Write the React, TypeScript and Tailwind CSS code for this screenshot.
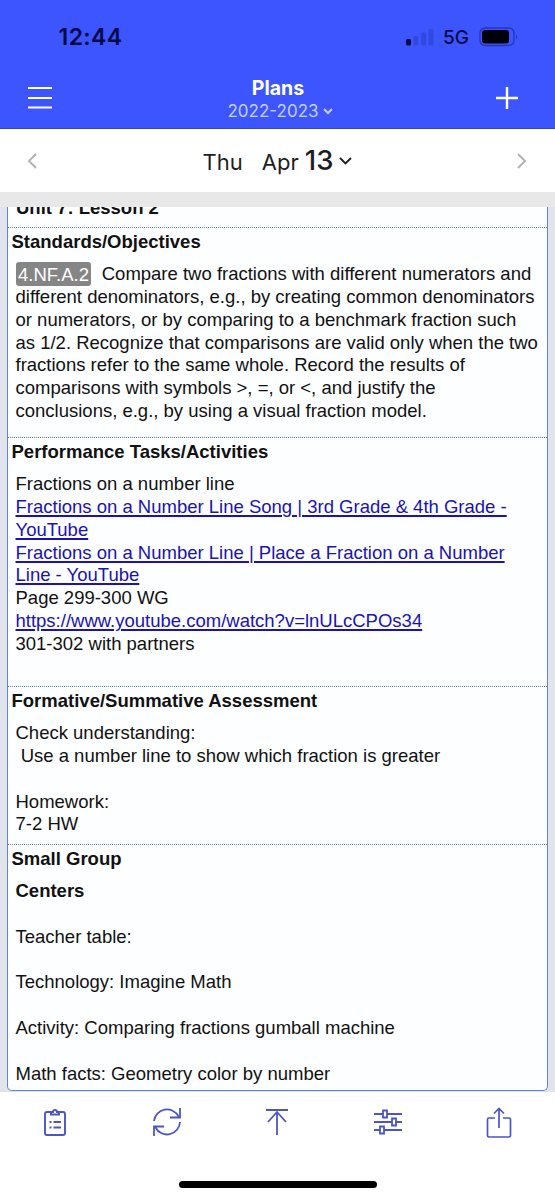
import React from "react";

function Section({ title, height, children }: { title: string; height: string; children: React.ReactNode }) {
  return (
    <section className={`${height} shrink-0 border-t border-dotted border-[#5f7fa6] pt-[2.500px] pl-[3.500px]`}>
      <h2 className="font-bold">{title}</h2>
      <div className="pt-[10px] pl-1 whitespace-pre">{children}</div>
    </section>
  );
}

function Link({ children }: { children: React.ReactNode }) {
  return (
    <a href="#" className="text-[#1a12b4] underline decoration-[1.500px] underline-offset-2">
      {children}
    </a>
  );
}

const iconProps = { fill: "none", stroke: "#4b55c4", strokeWidth: 1.6 } as const;

export default function App() {
  return (
    <div className="flex h-[1200px] w-[555px] flex-col overflow-hidden bg-white font-['Inter',sans-serif]">
      <header className="flex h-[129px] shrink-0 flex-col border-b border-[#3445b4] bg-[#3c55ff]">
        <div className="flex h-[74px] items-center justify-between pr-[37px] pl-[58.500px] text-[#060a45]">
          <span className="pt-px text-[23px] font-semibold tracking-[0.4px]">12:44</span>
          <div className="flex items-center">
            <svg width="28" height="18" viewBox="0 0 28 18" className="mr-[9px]">
              <rect x="0" y="11" width="5" height="6.5" rx="1.5" fill="#060a45" />
              <rect x="7.5" y="8" width="5" height="9.5" rx="1.5" fill="#3149df" />
              <rect x="15" y="4.5" width="5" height="13" rx="1.5" fill="#3149df" />
              <rect x="22.5" y="1" width="5" height="16.5" rx="1.5" fill="#3149df" />
            </svg>
            <span className="mr-[10px] pt-[2px] text-[19px] font-medium">5G</span>
            <svg width="39" height="20" viewBox="0 0 39 20">
              <rect x="1" y="1" width="34" height="17.5" rx="5" fill="none" stroke="#2536b0" strokeWidth="1.3" />
              <rect x="3" y="3" width="27" height="13.5" rx="3" fill="#00000c" />
              <path d="M37 7v5.500q2-2.500 0-5.500" fill="#2536b0" />
            </svg>
          </div>
        </div>
        <div className="flex h-[54px] items-start justify-between pr-[37px] pl-[28px] text-white">
          <svg width="24" height="24" viewBox="0 0 24 24" className="mt-[12px]" stroke="currentColor" strokeWidth="2">
            <path d="M0 2h24M0 12h24M0 21.500h24" />
          </svg>
          <div className="flex flex-col items-center pl-[12px]">
            <span className="mt-[2px] mr-[4px] text-[19.500px] leading-6 font-bold">Plans</span>
            <span className="flex items-center text-[17px] leading-[22px] text-[#c5ceff]">
              2022-2023
              <svg width="10" height="7" viewBox="0 0 10 7" className="ml-1" fill="none" stroke="currentColor" strokeWidth="2">
                <path d="m1 1 4 4 4-4" />
              </svg>
            </span>
          </div>
          <svg width="22" height="22" viewBox="0 0 22 22" className="mt-[13px]" stroke="currentColor" strokeWidth="2.4">
            <path d="M0 11h22M11 0v22" />
          </svg>
        </div>
      </header>

      <nav className="flex h-[63px] shrink-0 items-center justify-between pr-[28px] pl-[27px] text-[#1d1d1f]">
        <svg width="11" height="16" viewBox="0 0 11 16" fill="none" stroke="#b0b0b0" strokeWidth="1.8">
          <path d="M9 1 2 8l7 7" />
        </svg>
        <div className="flex items-center pt-px pl-px">
          <div className="flex items-baseline pt-px">
            <span className="text-[22px]">Thu</span>
            <span className="ml-[19px] text-[22px]">Apr</span>
            <span className="ml-[6px] text-[27.500px] leading-8 font-medium">13</span>
          </div>
          <svg width="13" height="8" viewBox="0 0 13 8" className="ml-[6px]" fill="none" stroke="currentColor" strokeWidth="1.8">
            <path d="m1 1 5.500 5.500L12 1" />
          </svg>
        </div>
        <svg width="11" height="16" viewBox="0 0 11 16" fill="none" stroke="#b0b0b0" strokeWidth="1.8">
          <path d="m2 1 7 7-7 7" />
        </svg>
      </nav>

      <div className="h-[15px] shrink-0 bg-[#e8e8e8]" />

      <main className="flex h-[884px] shrink-0 bg-[#e1e4ec] px-[7px] font-['Liberation_Sans',sans-serif] text-[18.500px] leading-[22.800px] text-[#111]">
        <div className="flex w-[541px] flex-col overflow-hidden rounded-b-[5px] border-r border-b border-l border-[#5f86cf] bg-[#fdfeff]">
          <div className="flex h-[20px] shrink-0 items-end overflow-hidden pb-[7px] pl-2 font-bold">
            <span>Unit 7: Lesson 2</span>
          </div>
          <Section title="Standards/Objectives" height="h-[210px]">
            <span className="rounded-[3px] bg-[#858585] px-[2.500px] py-[1.500px] text-white">4.NF.A.2</span>
            {"  Compare two fractions with different numerators and\ndifferent denominators, e.g., by creating common denominators\nor numerators, or by comparing to a benchmark fraction such\nas 1/2. Recognize that comparisons are valid only when the two\nfractions refer to the same whole. Record the results of\ncomparisons with symbols >, =, or <, and justify the\nconclusions, e.g., by using a visual fraction model."}
          </Section>
          <Section title="Performance Tasks/Activities" height="h-[249px]">
            {"Fractions on a number line\n"}
            <Link>{"Fractions on a Number Line Song | 3rd Grade & 4th Grade -\nYouTube"}</Link>
            {"\n"}
            <Link>{"Fractions on a Number Line | Place a Fraction on a Number\nLine - YouTube"}</Link>
            {"\nPage 299-300 WG\n"}
            <Link>https://www.youtube.com/watch?v=lnULcCPOs34</Link>
            {"\n301-302 with partners"}
          </Section>
          <Section title="Formative/Summative Assessment" height="h-[158px]">
            {"Check understanding:\n Use a number line to show which fraction is greater\n\nHomework:\n7-2 HW"}
          </Section>
          <Section title="Small Group" height="h-[246px]">
            <b>Centers</b>
            {"\n\nTeacher table:\n\nTechnology: Imagine Math\n\nActivity: Comparing fractions gumball machine\n\nMath facts: Geometry color by number"}
          </Section>
        </div>
      </main>

      <footer className="flex h-[109px] shrink-0 flex-col items-center border-t border-[#dfe1e5] bg-white">
        <div className="grid h-[62px] w-full grid-cols-5 place-items-center">
          <svg width="24" height="30" viewBox="0 0 24 30" {...iconProps} className="-mt-[3px] mr-[2px]" strokeWidth={1.9}>
            <path d="M8 5H4a2 2 0 0 0-2 2v19a2 2 0 0 0 2 2h16a2 2 0 0 0 2-2V7a2 2 0 0 0-2-2h-4M8 5v2.500h8V5h-2a2 2 0 1 0-4 0zM10.500 15H18M10.500 20.500H18M6.500 15h2M6.500 20.500h2" />
          </svg>
          <svg width="30" height="30" viewBox="0 0 30 30" {...iconProps} className="-mt-[2px]" strokeWidth={1.8}>
            <path d="M2 14A13 13 0 0 1 26.500 9.500M28 15A13 13 0 0 1 3.500 20.500M28 1v9.500H18M2 29v-9.500h10" />
          </svg>
          <svg width="24" height="28" viewBox="0 0 24 28" {...iconProps} className="-mt-[2px] mr-px" strokeWidth={1.8}>
            <path d="M1 2h22M12 4v23M3 14l9-10 9 10" />
          </svg>
          <svg width="30" height="26" viewBox="0 0 30 26" {...iconProps} className="-mt-[2px] mr-px" strokeWidth={1.8}>
            <path d="M1 5h9M14 5h15M1 13h18M23 13h6M1 21h6M11 21h18M10 1.500h4v7h-4zM19 9.500h4v7h-4zM7 17.500h4v7H7z" />
          </svg>
          <svg width="26" height="32" viewBox="0 0 26 32" {...iconProps} className="-mt-px mr-[2px]" strokeWidth={1.7}>
            <path d="M9 11H3a1.500 1.500 0 0 0-1.500 1.500v16A1.500 1.500 0 0 0 3 30h20a1.500 1.500 0 0 0 1.500-1.500v-16A1.500 1.500 0 0 0 23 11h-6M13 21V1.500M8 6.500l5-5 5 5" />
          </svg>
        </div>
        <div className="mt-[27px] h-[7px] w-[198px] rounded-full bg-black" />
      </footer>
    </div>
  );
}
